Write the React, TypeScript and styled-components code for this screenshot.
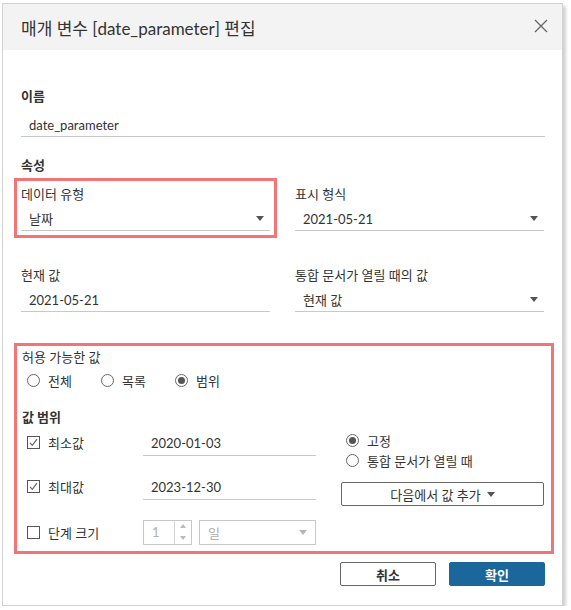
import React from 'react'
import styled, { createGlobalStyle } from 'styled-components'

const GlobalStyle = createGlobalStyle`
  html, body {
    margin: 0;
    padding: 0;
    background: #fff;
  }
  body {
    font-family: "Lato", "Noto Sans CJK KR", sans-serif;
    font-size: 13px;
    color: #333;
  }
`

const Page = styled.div`
  padding: 3px 0 0 2px;
`

const Dialog = styled.div`
  width: 559px;
  border: 1px solid #d2d2d2;
  background: #fff;
  box-shadow: 3px 3px 3px rgba(0, 0, 0, 0.18);
`

const Header = styled.div`
  height: 46px;
  background: #f3f3f3;
  display: flex;
  align-items: center;
  justify-content: space-between;
  padding: 0 12px 0 18px;
`

const Title = styled.h1`
  margin: 0;
  font-size: 17px;
  font-weight: 400;
  color: #333;
`

const Close = styled.button`
  border: 0;
  background: none;
  padding: 0;
  width: 16px;
  height: 16px;
  display: flex;
  cursor: pointer;
`

const Body = styled.div`
  padding: 37px 17px 19px 18px;
`

const SectionLabel = styled.div<{ mt?: number }>`
  height: 18px;
  line-height: 18px;
  font-weight: 700;
  margin-top: ${p => p.mt ?? 0}px;
`

const FieldLabel = styled.div`
  height: 18px;
  line-height: 18px;
`

const ValueRow = styled.div<{ mt?: number }>`
  height: 28px;
  box-sizing: border-box;
  border-bottom: 1px solid #c8c8c8;
  display: flex;
  align-items: center;
  justify-content: space-between;
  padding: 4px 6px 0 8px;
  margin-top: ${p => p.mt ?? 0}px;
`

const Columns = styled.div<{ mt: number }>`
  display: grid;
  grid-template-columns: 249px 249px;
  column-gap: 25px;
  margin-top: ${p => p.mt}px;
`

const Field = styled.div<{ marked?: boolean }>`
  outline: ${p => (p.marked ? '3px solid #f37474' : 'none')};
  outline-offset: 4px;
`

const Caret = styled.span<{ light?: boolean }>`
  width: 0;
  height: 0;
  border-left: 4.5px solid transparent;
  border-right: 4.5px solid transparent;
  border-top: 5px solid ${p => (p.light ? '#b5b5b5' : '#555')};
`

const Highlight = styled.div`
  margin: 31px -9px 0 -7px;
  border: 3px solid #f37474;
  padding: 2px 9px 6px 5px;
`

const RadioGroup = styled.div<{ mt?: number }>`
  display: flex;
  margin-top: ${p => p.mt ?? 0}px;
  padding-left: 5px;
`

const RadioItem = styled.label<{ width?: number }>`
  display: flex;
  align-items: center;
  gap: 8px;
  height: 20px;
  width: ${p => (p.width ? `${p.width}px` : 'auto')};
`

const RadioCircle = styled.span<{ checked?: boolean }>`
  width: 13px;
  height: 13px;
  box-sizing: border-box;
  border: 1px solid #666;
  border-radius: 50%;
  display: flex;
  align-items: center;
  justify-content: center;
  &::after {
    content: '';
    display: ${p => (p.checked ? 'block' : 'none')};
    width: 7px;
    height: 7px;
    border-radius: 50%;
    background: #555;
  }
`

const Range = styled.div`
  display: flex;
  margin-top: 3px;
`

const RangeLeft = styled.div`
  width: 294px;
`

const RangeRight = styled.div`
  margin-left: 25px;
  width: 203px;
  padding-top: 1px;
`

const RangeRow = styled.div<{ mt?: number }>`
  display: flex;
  align-items: center;
  margin-top: ${p => p.mt ?? 0}px;
`

const CheckLabel = styled.label`
  width: 116px;
  padding-left: 5px;
  display: flex;
  align-items: center;
  gap: 8px;
  align-self: flex-start;
  height: 26px;
`

const Box = styled.span`
  width: 13px;
  height: 13px;
  box-sizing: border-box;
  border: 1px solid #555;
  display: flex;
  align-items: center;
  justify-content: center;
`

const DateInput = styled.div`
  width: 173px;
  height: 27px;
  box-sizing: border-box;
  border-bottom: 1px solid #c8c8c8;
  display: flex;
  align-items: center;
  padding: 1px 0 0 8px;
`

const Spin = styled.div`
  width: 49px;
  height: 25px;
  box-sizing: border-box;
  border: 1px solid #c8c8c8;
  display: flex;
  color: #b0b0b0;
`

const SpinValue = styled.span`
  flex: 1;
  padding-left: 8px;
  display: flex;
  align-items: center;
`

const SpinArrows = styled.span`
  width: 16px;
  border-left: 1px solid #d6d6d6;
  display: flex;
  flex-direction: column;
  align-items: center;
  justify-content: space-around;
`

const Tri = styled.span<{ up?: boolean }>`
  width: 0;
  height: 0;
  border-left: 3.5px solid transparent;
  border-right: 3.5px solid transparent;
  ${p => (p.up ? 'border-bottom' : 'border-top')}: 4px solid #bbb;
`

const UnitSelect = styled.div`
  width: 117px;
  height: 25px;
  margin-left: 7px;
  box-sizing: border-box;
  border: 1px solid #c8c8c8;
  display: flex;
  align-items: center;
  justify-content: space-between;
  padding: 0 8px 0 8px;
  color: #b0b0b0;
`

const ValueButton = styled.button`
  margin-top: 12px;
  width: 203px;
  height: 24px;
  border: 1px solid #666;
  border-radius: 2px;
  background: #fff;
  font: inherit;
  color: #333;
  display: flex;
  align-items: center;
  justify-content: center;
  gap: 6px;
`

const Footer = styled.div`
  display: flex;
  justify-content: flex-end;
  gap: 13px;
  margin-top: 8px;
`

const FooterButton = styled.button<{ primary?: boolean }>`
  width: 96px;
  height: 24px;
  border-radius: 2px;
  border: 1px solid ${p => (p.primary ? '#1b679b' : '#666')};
  background: ${p => (p.primary ? '#1b679b' : '#fff')};
  color: ${p => (p.primary ? '#fff' : '#333')};
  font: inherit;
  font-weight: 700;
`

const Check = () => (
  <svg width="11" height="11" viewBox="0 0 11 11">
    <path d="M2 5.8 L4.3 8.3 L9 2.2" fill="none" stroke="#666" strokeWidth="1.2" />
  </svg>
)

const Radio: React.FC<{ label: string; checked?: boolean; width?: number }> = ({ label, checked, width }) => (
  <RadioItem width={width}>
    <RadioCircle checked={checked} />
    {label}
  </RadioItem>
)

export default function App() {
  return (
    <Page>
      <GlobalStyle />
      <Dialog>
        <Header>
          <Title>매개 변수 [date_parameter] 편집</Title>
          <Close aria-label="닫기">
            <svg width="14" height="14" viewBox="0 0 14 14">
              <path d="M1 1 L13 13 M13 1 L1 13" stroke="#666" strokeWidth="1.3" />
            </svg>
          </Close>
        </Header>
        <Body>
          <SectionLabel>이름</SectionLabel>
          <ValueRow mt={4}>date_parameter</ValueRow>

          <SectionLabel mt={19}>속성</SectionLabel>
          <Columns mt={11}>
            <Field marked>
              <FieldLabel>데이터 유형</FieldLabel>
              <ValueRow>
                날짜
                <Caret />
              </ValueRow>
            </Field>
            <Field>
              <FieldLabel>표시 형식</FieldLabel>
              <ValueRow>
                2021-05-21
                <Caret />
              </ValueRow>
            </Field>
          </Columns>

          <Columns mt={35}>
            <Field>
              <FieldLabel>현재 값</FieldLabel>
              <ValueRow>2021-05-21</ValueRow>
            </Field>
            <Field>
              <FieldLabel>통합 문서가 열릴 때의 값</FieldLabel>
              <ValueRow>
                현재 값
                <Caret />
              </ValueRow>
            </Field>
          </Columns>

          <Highlight>
            <FieldLabel>허용 가능한 값</FieldLabel>
            <RadioGroup mt={4}>
              <Radio label="전체" width={74} />
              <Radio label="목록" width={74} />
              <Radio label="범위" checked />
            </RadioGroup>

            <SectionLabel mt={18}>값 범위</SectionLabel>
            <Range>
              <RangeLeft>
                <RangeRow>
                  <CheckLabel>
                    <Box>
                      <Check />
                    </Box>
                    최소값
                  </CheckLabel>
                  <DateInput>2020-01-03</DateInput>
                </RangeRow>
                <RangeRow mt={17}>
                  <CheckLabel>
                    <Box>
                      <Check />
                    </Box>
                    최대값
                  </CheckLabel>
                  <DateInput>2023-12-30</DateInput>
                </RangeRow>
                <RangeRow mt={19}>
                  <CheckLabel>
                    <Box />
                    단계 크기
                  </CheckLabel>
                  <Spin>
                    <SpinValue>1</SpinValue>
                    <SpinArrows>
                      <Tri up />
                      <Tri />
                    </SpinArrows>
                  </Spin>
                  <UnitSelect>
                    일
                    <Caret light />
                  </UnitSelect>
                </RangeRow>
              </RangeLeft>
              <RangeRight>
                <RadioGroup>
                  <Radio label="고정" checked />
                </RadioGroup>
                <RadioGroup>
                  <Radio label="통합 문서가 열릴 때" />
                </RadioGroup>
                <ValueButton>
                  다음에서 값 추가
                  <Caret />
                </ValueButton>
              </RangeRight>
            </Range>
          </Highlight>

          <Footer>
            <FooterButton>취소</FooterButton>
            <FooterButton primary>확인</FooterButton>
          </Footer>
        </Body>
      </Dialog>
    </Page>
  )
}
